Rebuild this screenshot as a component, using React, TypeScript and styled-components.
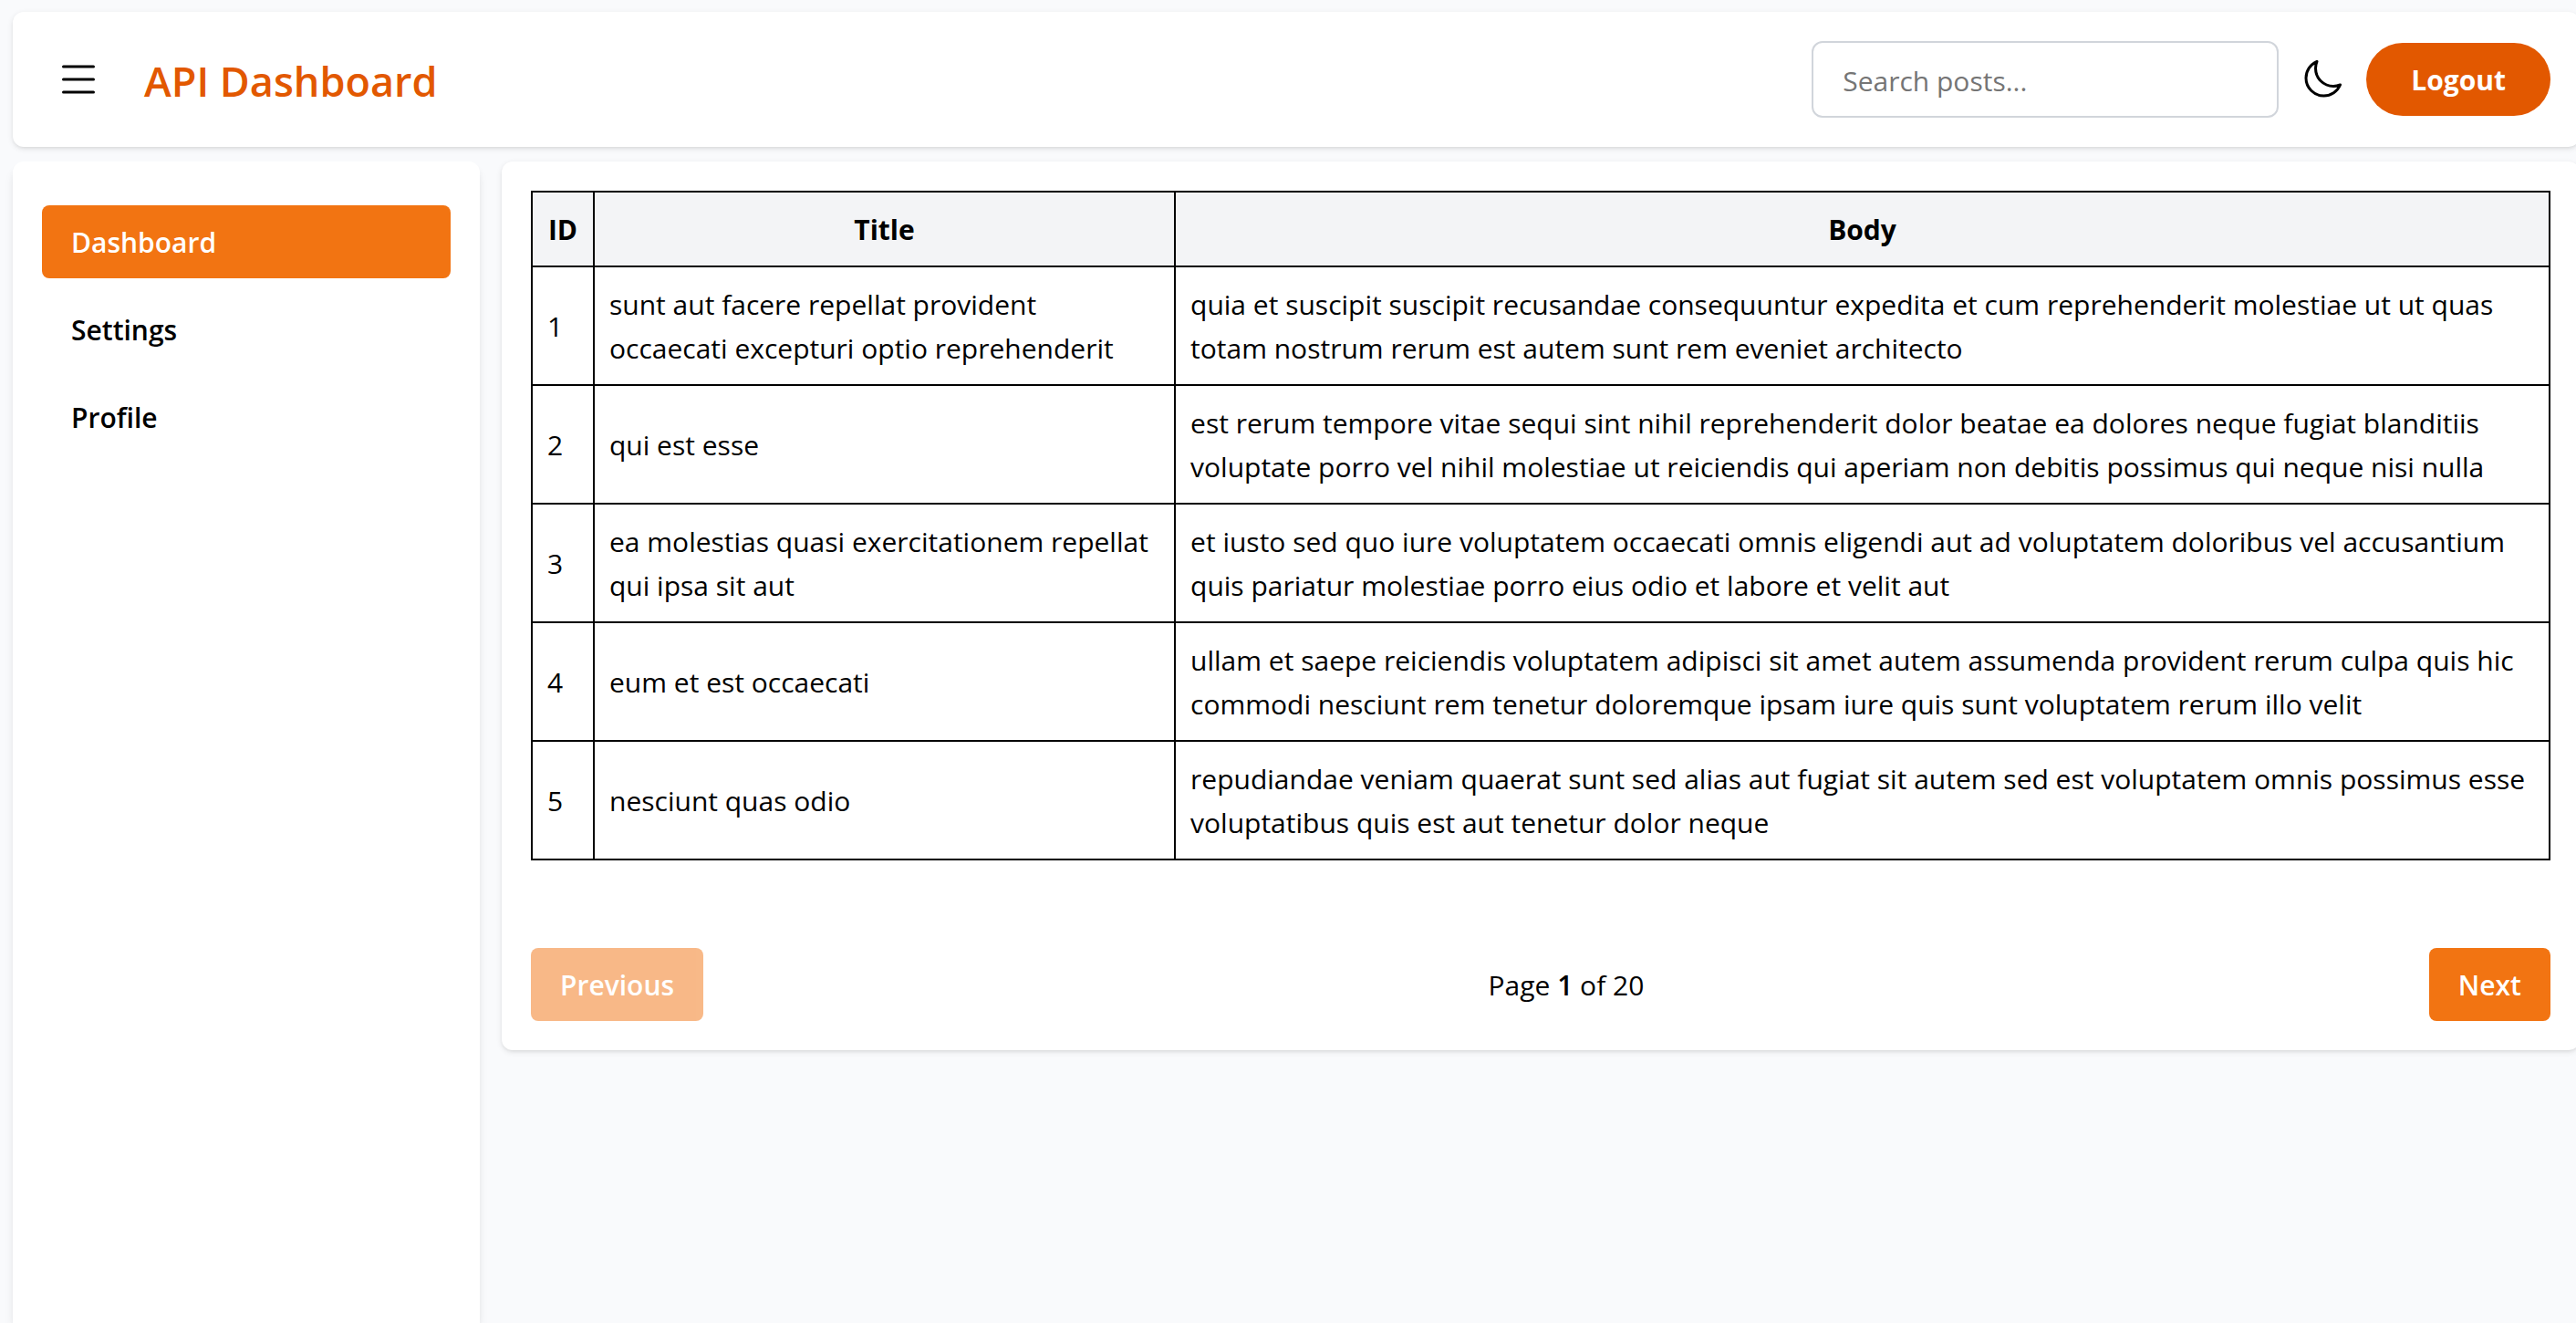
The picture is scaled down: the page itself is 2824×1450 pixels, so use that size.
import React, { useState } from "react";
import styled, { createGlobalStyle } from "styled-components";

const GlobalStyle = createGlobalStyle`
  *, *::before, *::after { box-sizing: border-box; }
  body {
    margin: 0;
    overflow: hidden;
    background: #f9fafc;
    color: #000;
    font-family: "Open Sans", "Noto Sans", sans-serif;
    font-size: 30px;
    line-height: 48px;
  }
  button, input { font: inherit; color: inherit; }
`;

const Shell = styled.div`
  display: flex;
  flex-direction: column;
  gap: 16px;
  height: 100vh;
  padding: 13px 0 0 14px;
  margin-right: -4px;
`;

const Header = styled.header`
  display: flex;
  align-items: center;
  justify-content: space-between;
  padding: 32px;
  background: #fff;
  border-radius: 12px;
  box-shadow: 0 2px 6px rgba(0, 0, 0, 0.1), 0 2px 4px -2px rgba(0, 0, 0, 0.1);
`;

const Brand = styled.div`
  display: flex;
  align-items: center;
  gap: 32px;
`;

const Title = styled.h1`
  margin: 0;
  padding-top: 4px;
  font-size: 45px;
  line-height: 64px;
  font-weight: 600;
  color: #e25800;
`;

const Actions = styled.div`
  display: flex;
  align-items: center;
  gap: 24px;
`;

const IconButton = styled.button<{ $padding?: number }>`
  display: flex;
  padding: 0 ${(p) => p.$padding ?? 0}px;
  border: 0;
  background: none;
  cursor: pointer;
`;

const Icon = styled.svg`
  width: 48px;
  height: 48px;
  fill: none;
  stroke: currentColor;
  stroke-width: 1.5;
  stroke-linecap: round;
  stroke-linejoin: round;
`;

const Search = styled.input`
  width: 512px;
  height: 84px;
  padding: 17px 32px 15px;
  border: 2px solid #d1d5db;
  border-radius: 12px;
  background: #fff;
  &::placeholder { color: #757575; opacity: 1; }
`;

const LogoutButton = styled.button`
  height: 80px;
  padding: 2px 49px 0;
  border: 0;
  border-radius: 40px;
  background: #e25800;
  color: #fff;
  font-weight: 700;
  cursor: pointer;
`;

const Content = styled.div`
  display: flex;
  flex: 1;
  align-items: flex-start;
  gap: 24px;
`;

const Sidebar = styled.nav`
  flex: none;
  align-self: stretch;
  width: 512px;
  padding: 48px 32px;
  background: #fff;
  border-radius: 12px 12px 0 0;
  box-shadow: 0 8px 12px -2px rgba(0, 0, 0, 0.1), 0 4px 8px -4px rgba(0, 0, 0, 0.1);
`;

const NavList = styled.ul`
  display: flex;
  flex-direction: column;
  gap: 16px;
  margin: 0;
  padding: 0;
  list-style: none;
`;

const NavLink = styled.a<{ $active?: boolean }>`
  display: block;
  padding: 17px 32px 15px;
  border-radius: 8px;
  background: ${(p) => (p.$active ? "#f27412" : "transparent")};
  color: ${(p) => (p.$active ? "#fff" : "#000")};
  font-weight: 600;
  text-decoration: none;
`;

const Main = styled.main`
  display: flex;
  flex: 1;
  flex-direction: column;
  gap: 96px;
  min-width: 0;
  padding: 32px;
  background: #fff;
  border-radius: 12px;
  box-shadow: 0 2px 6px rgba(0, 0, 0, 0.1), 0 2px 4px -2px rgba(0, 0, 0, 0.1);
`;

const Table = styled.table`
  width: 100%;
  border-collapse: collapse;
  table-layout: fixed;
`;

const Th = styled.th<{ $width?: string }>`
  width: ${(p) => p.$width ?? "auto"};
  padding: 17px 16px 15px;
  border: 2px solid #000;
  background: #f3f4f6;
  font-weight: 700;
`;

const Td = styled.td`
  padding: 17px 16px 15px;
  border: 2px solid #000;
`;

const Pager = styled.div`
  display: flex;
  align-items: center;
  justify-content: space-between;
`;

const PageLabel = styled.span`
  padding-top: 2px;
  strong { font-weight: 600; }
`;

const PageButton = styled.button`
  height: 80px;
  padding: 2px 32px 0;
  border: 0;
  border-radius: 8px;
  background: #f27412;
  color: #fff;
  font-weight: 600;
  cursor: pointer;
  &:disabled { opacity: 0.5; cursor: default; }
`;

const links = ["Dashboard", "Settings", "Profile"];

const posts = [
  {
    id: 1,
    title: "sunt aut facere repellat provident occaecati excepturi optio reprehenderit",
    body: "quia et suscipit suscipit recusandae consequuntur expedita et cum reprehenderit molestiae ut ut quas totam nostrum rerum est autem sunt rem eveniet architecto",
  },
  {
    id: 2,
    title: "qui est esse",
    body: "est rerum tempore vitae sequi sint nihil reprehenderit dolor beatae ea dolores neque fugiat blanditiis voluptate porro vel nihil molestiae ut reiciendis qui aperiam non debitis possimus qui neque nisi nulla",
  },
  {
    id: 3,
    title: "ea molestias quasi exercitationem repellat qui ipsa sit aut",
    body: "et iusto sed quo iure voluptatem occaecati omnis eligendi aut ad voluptatem doloribus vel accusantium quis pariatur molestiae porro eius odio et labore et velit aut",
  },
  {
    id: 4,
    title: "eum et est occaecati",
    body: "ullam et saepe reiciendis voluptatem adipisci sit amet autem assumenda provident rerum culpa quis hic commodi nesciunt rem tenetur doloremque ipsam iure quis sunt voluptatem rerum illo velit",
  },
  {
    id: 5,
    title: "nesciunt quas odio",
    body: "repudiandae veniam quaerat sunt sed alias aut fugiat sit autem sed est voluptatem omnis possimus esse voluptatibus quis est aut tenetur dolor neque",
  },
];

export default function App() {
  const [query, setQuery] = useState("");
  const shown = posts.filter((p) => p.title.includes(query.toLowerCase()));

  return (
    <>
      <GlobalStyle />
      <Shell>
        <Header>
          <Brand>
            <IconButton type="button" aria-label="Toggle menu" $padding={16}>
              <Icon viewBox="0 0 24 24" aria-hidden="true">
                <path d="M3.75 5h16.5M3.75 12h16.5M3.75 19h16.5" />
              </Icon>
            </IconButton>
            <Title>API Dashboard</Title>
          </Brand>
          <Actions>
            <Search
              type="text"
              aria-label="Search posts"
              placeholder="Search posts..."
              value={query}
              onChange={(e) => setQuery(e.target.value)}
            />
            <IconButton type="button" aria-label="Toggle dark mode">
              <Icon viewBox="0 0 24 24" aria-hidden="true">
                <path d="M21.752 15.002A9.72 9.72 0 0 1 18 15.75c-5.385 0-9.75-4.365-9.75-9.75 0-1.33.266-2.597.748-3.752A9.753 9.753 0 0 0 3 11.25C3 16.635 7.365 21 12.75 21a9.753 9.753 0 0 0 9.002-5.998Z" />
              </Icon>
            </IconButton>
            <LogoutButton type="button">Logout</LogoutButton>
          </Actions>
        </Header>
        <Content>
          <Sidebar>
            <NavList>
              {links.map((label, i) => (
                <li key={label}>
                  <NavLink href={`#${label.toLowerCase()}`} $active={i === 0}>
                    {label}
                  </NavLink>
                </li>
              ))}
            </NavList>
          </Sidebar>
          <Main>
            <Table>
              <thead>
                <tr>
                  <Th $width="68px">ID</Th>
                  <Th $width="28.8%">Title</Th>
                  <Th>Body</Th>
                </tr>
              </thead>
              <tbody>
                {shown.map((post) => (
                  <tr key={post.id}>
                    <Td>{post.id}</Td>
                    <Td>{post.title}</Td>
                    <Td>{post.body}</Td>
                  </tr>
                ))}
              </tbody>
            </Table>
            <Pager>
              <PageButton type="button" disabled>
                Previous
              </PageButton>
              <PageLabel>
                Page <strong>1</strong> of 20
              </PageLabel>
              <PageButton type="button">Next</PageButton>
            </Pager>
          </Main>
        </Content>
      </Shell>
    </>
  );
}
